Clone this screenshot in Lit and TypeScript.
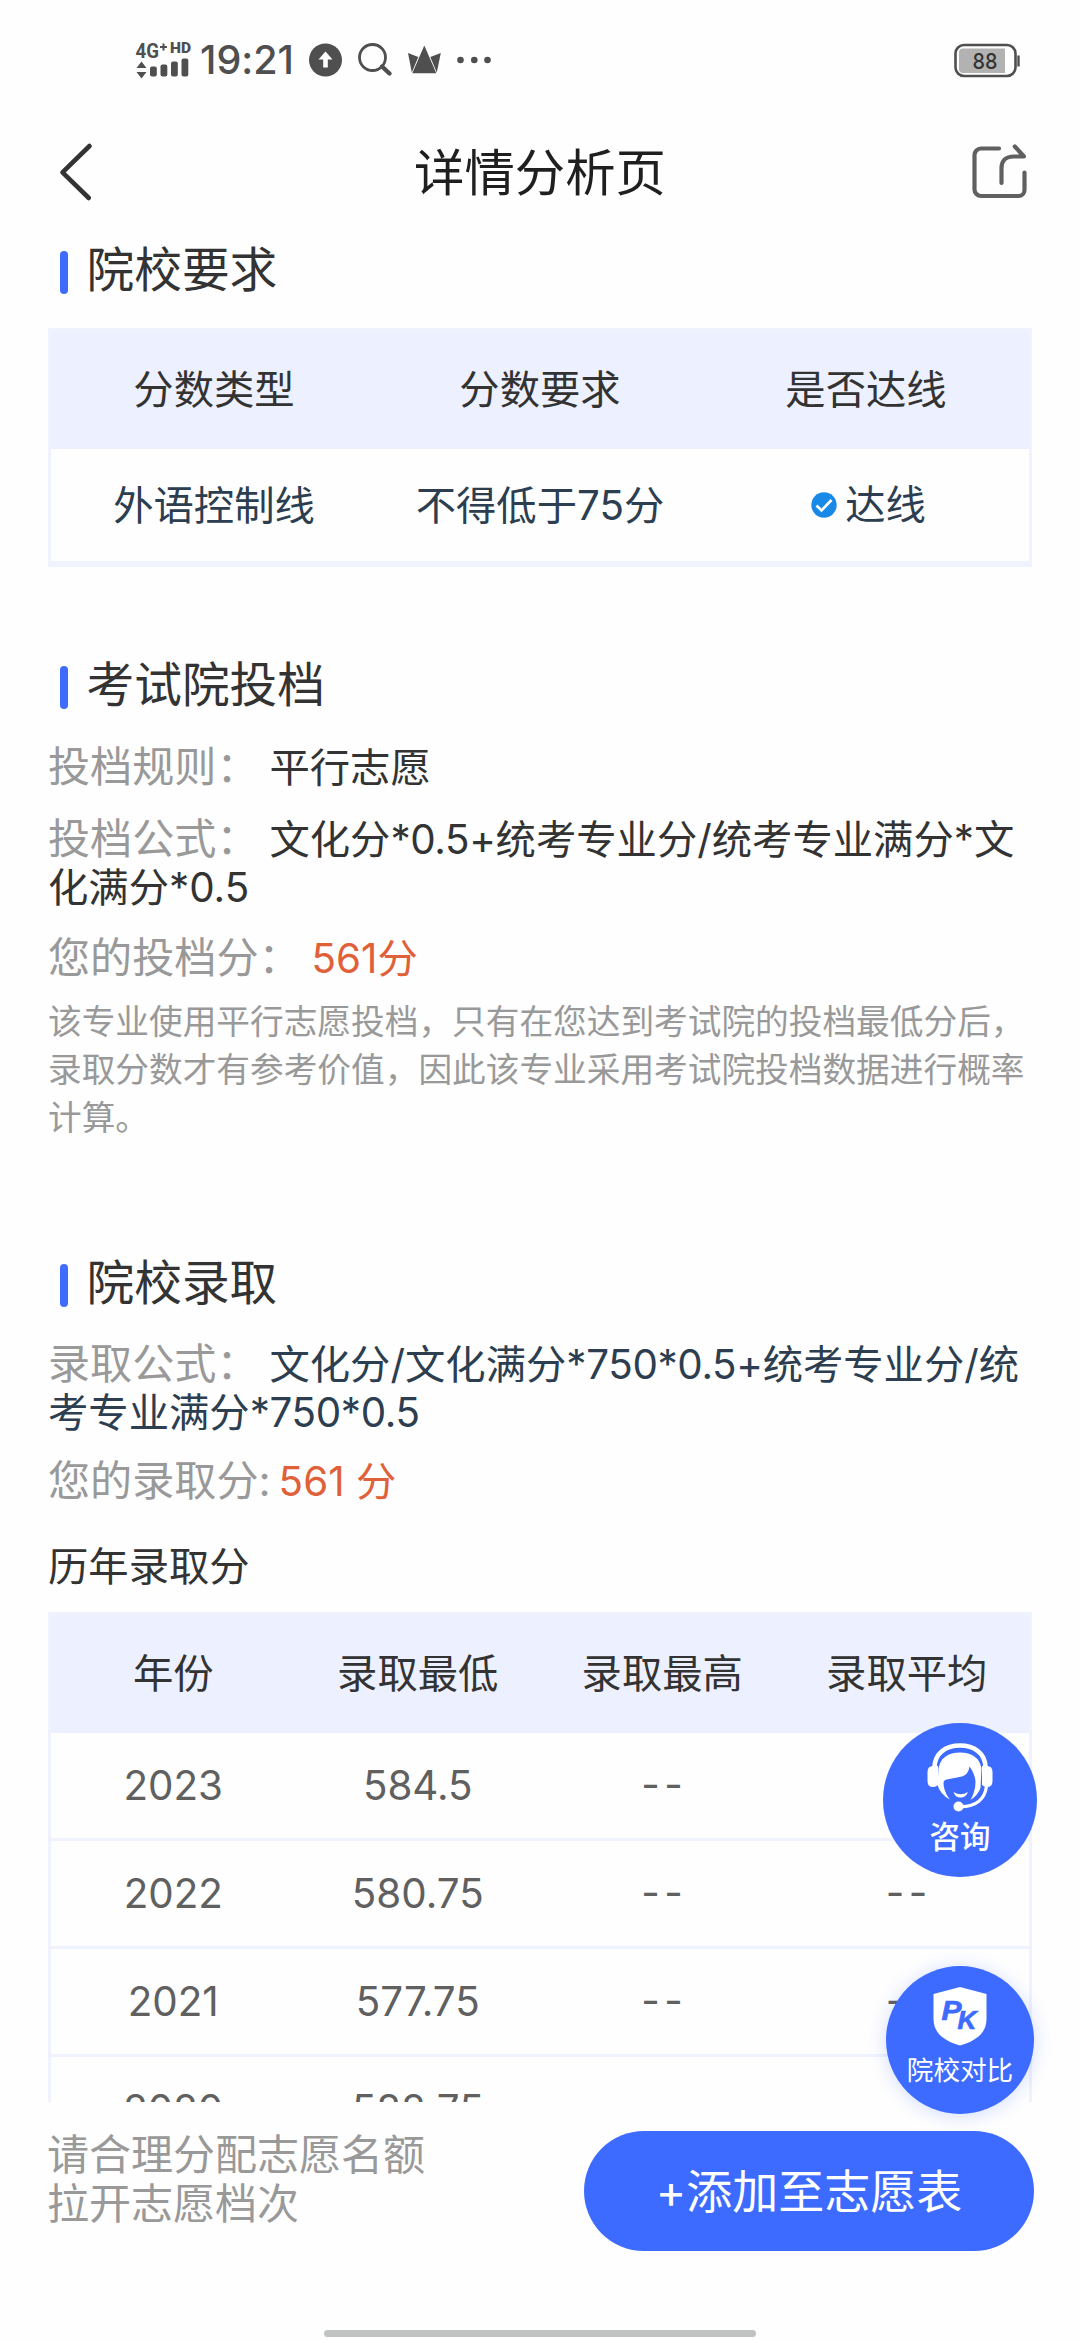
import { LitElement, html, css, svg } from "lit";
import { customElement, property } from "lit/decorators.js";

interface ScoreRow {
  year: string;
  low: string;
  high: string;
  avg: string;
}

const SCORES: ScoreRow[] = [
  { year: "2023", low: "584.5", high: "--", avg: "--" },
  { year: "2022", low: "580.75", high: "--", avg: "--" },
  { year: "2021", low: "577.75", high: "--", avg: "--" },
  { year: "2020", low: "582.75", high: "--", avg: "--" },
];

const SIGNAL_BARS = [
  { x: 15, h: 10 },
  { x: 25.5, h: 12 },
  { x: 36, h: 15 },
  { x: 46.5, h: 18 },
];

@customElement("status-bar")
class StatusBar extends LitElement {
  static styles = css`
    :host {
      display: flex;
      align-items: center;
      height: 119px;
      padding: 0 59px 0 135px;
      color: #4f4f4f;
    }
    .network {
      display: block;
      flex: none;
    }
    .time {
      margin-left: 8px;
      width: 97px;
      font-size: 39.5px;
      line-height: 40px;
      font-weight: 450;
      white-space: nowrap;
    }
    .icons {
      display: block;
      flex: none;
      margin-left: 8px;
    }
    .battery {
      display: block;
      margin-left: auto;
    }
    .tiny {
      font: 700 21px Roboto, sans-serif;
    }
    .hd {
      font: 900 14px Roboto, sans-serif;
    }
    .level {
      font: 500 22px Inter, sans-serif;
    }
  `;

  render() {
    return html`
      <svg class="network" width="57" height="40" viewBox="0 0 57 40" fill="#4f4f4f">
        <text class="tiny" x="0.500" y="17.500" textLength="23.500" lengthAdjust="spacingAndGlyphs">4G</text>
        <path d="M25 7h7M28.500 3.500v7" stroke="#4f4f4f" stroke-width="2" />
        <text class="hd" x="35" y="12.500" textLength="21" lengthAdjust="spacingAndGlyphs">HD</text>
        <path d="M6.500 21.500l5 6.500h-10zM6.500 38.500l5-6.500h-10z" />
        ${SIGNAL_BARS.map(
          (b) => svg`<rect x=${b.x} y=${36.5 - b.h} width="6.800" height=${b.h} rx="2" />`
        )}
      </svg>
      <div class="time">19:21</div>
      <svg class="icons" width="190" height="40" viewBox="0 0 190 40" fill="none">
        <circle cx="20.500" cy="20" r="16.500" fill="#4f4f4f" />
        <path d="M20.500 11.500l7 8h-4.700v8h-4.600v-8h-4.700z" fill="#fff" />
        <circle cx="67.500" cy="17.500" r="13" stroke="#4f4f4f" stroke-width="2.800" />
        <path d="M77 26.500l7.500 7" stroke="#4f4f4f" stroke-width="4.400" stroke-linecap="round" />
        <path d="M119.300 5.500L131.300 33.300H107.300z" fill="#4f4f4f" />
        <path d="M103 13L113.300 17L106.800 32.500zM135.800 13L125.300 17L131.800 32.500z" fill="#4f4f4f" />
        <circle cx="155.500" cy="20" r="3.300" fill="#4f4f4f" />
        <circle cx="169.300" cy="20" r="3.300" fill="#4f4f4f" />
        <circle cx="182.500" cy="20" r="3.300" fill="#4f4f4f" />
      </svg>
      <svg class="battery" width="68" height="36" viewBox="0 0 68 36">
        <rect x="2.500" y="3" width="60" height="31" rx="8.500" fill="none" stroke="#4f4f4f" stroke-width="2.600" />
        <path d="M10 6.500h42v24.500h-42a4 4 0 0 1-4-4v-16.500a4 4 0 0 1 4-4z" fill="#b2b2b2" />
        <path d="M65.500 13.500v11" stroke="#4f4f4f" stroke-width="2.400" />
        <text class="level" x="19.500" y="26.500" fill="#333" textLength="25" lengthAdjust="spacingAndGlyphs">88</text>
      </svg>
    `;
  }
}

@customElement("nav-bar")
class NavBar extends LitElement {
  static styles = css`
    :host {
      display: grid;
      grid-template-columns: 120px 1fr 120px;
      align-items: center;
      height: 105px;
    }
    .title {
      margin-top: 3px;
      text-align: center;
      font-size: 50.4px;
      line-height: 56px;
      color: #1f1f1f;
    }
    .back {
      display: block;
      margin-left: 54px;
    }
    .share {
      display: block;
      margin-left: 8px;
    }
  `;

  render() {
    return html`
      <svg class="back" width="42" height="60" viewBox="0 0 42 60" fill="none" stroke="#333" stroke-width="4.600" stroke-linecap="round" stroke-linejoin="round">
        <path d="M35.500 4L8.500 30.300L34.800 56" />
      </svg>
      <div class="title">详情分析页</div>
      <svg class="share" width="62" height="60" viewBox="0 0 62 60" fill="none" stroke="#606060" stroke-width="4.200" stroke-linecap="round" stroke-linejoin="round">
        <path d="M31 6.500H13a6.500 6.500 0 0 0-6.500 6.500v34.500a6.500 6.500 0 0 0 6.500 6.500h37.500a6 6 0 0 0 6-6V30.500" />
        <path d="M33.500 41V26c0-7 4.500-11.500 12-11.500h10.500L46.800 4.500" />
      </svg>
    `;
  }
}

@customElement("section-title")
class SectionTitle extends LitElement {
  @property() label = "";

  static styles = css`
    :host {
      display: flex;
      height: 48px;
      padding-left: 12px;
      gap: 18.5px;
    }
    .bar {
      width: 8px;
      height: 43px;
      margin-top: 5px;
      border-radius: 4px;
      background: #3f6bff;
    }
    .text {
      font-size: 47.7px;
      line-height: 49px;
      color: #333;
    }
  `;

  render() {
    return html`<div class="bar"></div><div class="text">${this.label}</div>`;
  }
}

@customElement("floating-actions")
class FloatingActions extends LitElement {
  static styles = css`
    :host {
      position: absolute;
      left: 883px;
      top: 1723px;
      display: flex;
      flex-direction: column;
      align-items: center;
      width: 154px;
      gap: 89px;
      color: #fff;
    }
    .fab {
      box-sizing: border-box;
      display: flex;
      flex-direction: column;
      align-items: center;
      border-radius: 50%;
      background: #3d6bff;
    }
    .consult {
      width: 154px;
      height: 154px;
      padding-top: 18px;
    }
    .compare {
      width: 148px;
      height: 148px;
      padding-top: 19px;
      box-shadow: 0 2px 18px rgba(61, 107, 255, 0.22);
    }
    .icon {
      display: block;
    }
    .consult-text {
      margin-top: 6.500px;
      font-size: 30.5px;
      line-height: 34px;
      font-weight: 500;
    }
    .compare-text {
      margin-top: 8px;
      font-size: 26.6px;
      line-height: 30px;
    }
    .p {
      font: italic 700 27px "Liberation Sans", sans-serif;
    }
    .k {
      font: italic 700 25px "Liberation Sans", sans-serif;
    }
  `;

  render() {
    return html`
      <div class="fab consult">
        <svg class="icon" width="70" height="72" viewBox="0 0 70 72">
          <path d="M9.500 26C10 12 21 4.500 35 4.500S60 12 60.500 26" fill="none" stroke="#fff" stroke-width="4.600" />
          <path d="M13.500 27Q17 11.500 35 11.500T56.500 27l-1 20Q53 54 45.500 59Q50.500 50 50.500 41Q50 33 44.500 25.500Q43.500 33.500 37 35.500L21.700 38.500Q18.500 39 18.500 42Q18.500 50 24.700 58.500Q15 53 12.500 44z" fill="#fff" />
          <path d="M8 25h5v19q-2 2-5 2Q2.500 46 2.500 40V31Q2.500 25 8 25zM62 25h-5v19q2 2 5 2Q67.500 46 67.500 40V31Q67.500 25 62 25z" fill="#fff" />
          <path d="M28.500 51q7 4.500 14.500 0q-2 5.500-7.500 5.500t-7-5.500z" fill="#fff" />
          <path d="M61.500 45C60 58 51 65.500 36 65.700" fill="none" stroke="#fff" stroke-width="3.200" />
          <circle cx="33.500" cy="65.500" r="5" fill="#fff" />
        </svg>
        <div class="consult-text">咨询</div>
      </div>
      <div class="fab compare">
        <svg class="icon" width="54" height="62" viewBox="0 0 54 62">
          <path d="M27 2l26.500 7v25c0 13-9 21.500-26.500 26.500C9.500 55.500.5 47 .5 34V9z" fill="#fff" />
          <g fill="#3d6bff" stroke="#3d6bff" stroke-width=".7">
            <text class="p" x="8.500" y="34.500" textLength="20" lengthAdjust="spacingAndGlyphs">P</text>
            <text class="k" x="24.500" y="43.500" textLength="19" lengthAdjust="spacingAndGlyphs">K</text>
          </g>
        </svg>
        <div class="compare-text">院校对比</div>
      </div>
    `;
  }
}

@customElement("app-root")
class AppRoot extends LitElement {
  static styles = css`
    :host {
      position: relative;
      display: flex;
      flex-direction: column;
      width: 1080px;
      height: 2340px;
      overflow: hidden;
      background: #fefefe;
      color: #333;
      font-family: Inter, "Noto Sans CJK SC", sans-serif;
      font-feature-settings: "calt" 0;
      font-size: 40.35px;
      line-height: 48px;
    }
    .content {
      flex: none;
      box-sizing: border-box;
      height: 1878px;
      padding: 22px 48px 0;
      overflow: hidden;
    }
    .grid {
      border: 3px solid #f0f2fd;
    }
    .row {
      display: grid;
      align-items: center;
      text-align: center;
    }
    .three {
      grid-template-columns: repeat(3, 1fr);
    }
    .four {
      grid-template-columns: repeat(4, 1fr);
    }
    .head {
      height: 118px;
      background: #edf0fe;
    }
    .limits {
      margin: 34px 0 94px;
    }
    .limit-row {
      box-sizing: border-box;
      height: 115px;
      padding-top: 2px;
      border-bottom: 3px solid #f0f2fd;
      color: #2c3e50;
    }
    .pass {
      display: flex;
      align-items: center;
      justify-content: center;
      gap: 8px;
      margin-top: -3px;
      padding-left: 5px;
    }
    .check {
      display: block;
    }
    .label {
      font-size: 42.1px;
      line-height: 0;
      color: #999;
      margin-right: 11px;
    }
    .tight {
      margin-right: 8px;
    }
    .rule {
      margin-top: 35px;
    }
    .formula {
      margin-top: 24px;
    }
    .score {
      margin-top: 23px;
    }
    .value {
      color: #e0603a;
    }
    .note {
      margin: 15px 0 117px;
      font-size: 33.68px;
      color: #999;
    }
    .formula2 {
      margin-top: 34px;
      color: #2c3e50;
    }
    .latin {
      letter-spacing: -0.35px;
    }
    .score2 {
      margin-top: 21px;
    }
    .history-title {
      margin: 37px 0 21px;
    }
    .score-row {
      height: 105px;
      border-bottom: 3px solid #f0f2fd;
      color: #606060;
    }
    .dash {
      letter-spacing: 4.500px;
      padding-left: 4px;
      margin-top: -2px;
    }
    .footer {
      display: flex;
      flex: 1;
      justify-content: space-between;
      padding: 29px 46px 0 47px;
    }
    .tip {
      font-size: 42px;
      line-height: 48.5px;
      color: #999;
    }
    .add {
      display: flex;
      align-items: center;
      justify-content: center;
      width: 450px;
      height: 120px;
      border-radius: 60px;
      background: #3d6bff;
      color: #fff;
      font-size: 46px;
    }
    .home {
      flex: none;
      align-self: center;
      width: 432px;
      height: 7px;
      margin-bottom: 3px;
      border-radius: 4px;
      background: #c1c3c2;
    }
  `;

  private scoreRow(r: ScoreRow) {
    return html`
      <div class="row four score-row">
        <div>${r.year}</div>
        <div>${r.low}</div>
        <div class="dash">${r.high}</div>
        <div class="dash">${r.avg}</div>
      </div>
    `;
  }

  render() {
    return html`
      <status-bar></status-bar>
      <nav-bar></nav-bar>
      <div class="content">
        <section-title label="院校要求"></section-title>
        <div class="grid limits">
          <div class="row three head">
            <div>分数类型</div>
            <div>分数要求</div>
            <div>是否达线</div>
          </div>
          <div class="row three limit-row">
            <div>外语控制线</div>
            <div>不得低于75分</div>
            <div class="pass">
              <svg class="check" width="26" height="26" viewBox="0 0 26 26">
                <circle cx="13" cy="13" r="12.700" fill="#1989e8" />
                <path d="M5.500 13.500l5 5L20.500 8" fill="none" stroke="#fff" stroke-width="2.600" />
              </svg>
              <span>达线</span>
            </div>
          </div>
        </div>

        <section-title label="考试院投档"></section-title>
        <div class="rule"><span class="label">投档规则：</span>平行志愿</div>
        <div class="formula"><span class="label">投档公式：</span>文化分<span class="latin">*0.5+</span>统考专业分/统考专业满分*文化满分*0.5</div>
        <div class="score"><span class="label">您的投档分：</span><span class="value">561分</span></div>
        <div class="note">该专业使用平行志愿投档，只有在您达到考试院的投档最低分后，录取分数才有参考价值，因此该专业采用考试院投档数据进行概率计算。</div>

        <section-title label="院校录取"></section-title>
        <div class="formula2"><span class="label">录取公式：</span>文化分/文化满分<span class="latin">*750*0.5+</span>统考专业分/统考专业满分<span class="latin">*750*0.5</span></div>
        <div class="score2"><span class="label tight">您的录取分:</span><span class="value">561 分</span></div>
        <div class="history-title">历年录取分</div>
        <div class="grid">
          <div class="row four head">
            <div>年份</div>
            <div>录取最低</div>
            <div>录取最高</div>
            <div>录取平均</div>
          </div>
          ${SCORES.map((r) => this.scoreRow(r))}
        </div>
      </div>
      <div class="footer">
        <div class="tip">请合理分配志愿名额<br />拉开志愿档次</div>
        <div class="add">+添加至志愿表</div>
      </div>
      <div class="home"></div>
      <floating-actions></floating-actions>
    `;
  }
}
